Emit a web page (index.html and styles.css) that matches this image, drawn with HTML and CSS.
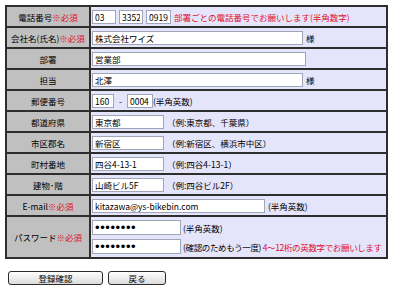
FILE: index.html
```html
<!DOCTYPE html>
<html lang="ja">
<head>
  <meta charset="UTF-8" />
  <title>会員登録</title>
  <link rel="stylesheet" href="styles.css">
</head>
<body>
  <form class="entry-form">
    <table class="entry-table">
      <colgroup>
        <col class="col-label" />
        <col />
      </colgroup>
      <tr>
        <th>電話番号<span class="req">※必須</span></th>
        <td>
          <div class="field">
            <input class="in w-tel1" type="text" value="03" />
            <input class="in w-tel2" type="text" value="3352" />
            <input class="in w-tel3" type="text" value="0919" />
            <span class="req">部署ごとの電話番号でお願いします(半角数字)</span>
          </div>
        </td>
      </tr>
      <tr>
        <th>会社名(氏名)<span class="req">※必須</span></th>
        <td>
          <div class="field">
            <input class="in w-long" type="text" value="株式会社ワイズ" />
            <span>様</span>
          </div>
        </td>
      </tr>
      <tr>
        <th>部署</th>
        <td>
          <div class="field">
            <input class="in w-dept" type="text" value="営業部" />
          </div>
        </td>
      </tr>
      <tr>
        <th>担当</th>
        <td>
          <div class="field">
            <input class="in w-long" type="text" value="北澤" />
            <span>様</span>
          </div>
        </td>
      </tr>
      <tr>
        <th>郵便番号</th>
        <td>
          <div class="field">
            <input class="in w-zip1" type="text" value="160" />
            <span class="dash">-</span>
            <input class="in w-zip2" type="text" value="0004" />
            <span class="tight">(半角英数)</span>
          </div>
        </td>
      </tr>
      <tr>
        <th>都道府県</th>
        <td>
          <div class="field">
            <input class="in w-addr" type="text" value="東京都" />
            <span>（例:東京都、千葉県）</span>
          </div>
        </td>
      </tr>
      <tr>
        <th>市区郡名</th>
        <td>
          <div class="field">
            <input class="in w-addr" type="text" value="新宿区" />
            <span>（例:新宿区、横浜市中区）</span>
          </div>
        </td>
      </tr>
      <tr>
        <th>町村番地</th>
        <td>
          <div class="field">
            <input class="in w-addr" type="text" value="四谷4-13-1" />
            <span>（例:四谷4-13-1）</span>
          </div>
        </td>
      </tr>
      <tr>
        <th>建物･階</th>
        <td>
          <div class="field">
            <input class="in w-addr" type="text" value="山崎ビル5F" />
            <span>（例:四谷ビル2F）</span>
          </div>
        </td>
      </tr>
      <tr>
        <th>E-mail<span class="req">※必須</span></th>
        <td>
          <div class="field">
            <input class="in w-mail" type="text" value="kitazawa@ys-bikebin.com" />
            <span>(半角英数)</span>
          </div>
        </td>
      </tr>
      <tr>
        <th class="tall">パスワード<span class="req">※必須</span></th>
        <td class="tall">
          <div class="field field-pw">
            <input class="in pw w-pass" type="password" value="12345678" />
            <span>(半角英数)</span>
          </div>
          <div class="field field-pw">
            <input class="in pw w-pass" type="password" value="12345678" />
            <span class="condensed">(確認のためもう一度) <span class="req">4〜12桁の英数字でお願いします</span></span>
          </div>
        </td>
      </tr>
    </table>
    <div class="actions">
      <button type="button" class="btn btn-confirm">登録確認</button>
      <button type="button" class="btn btn-back">戻る</button>
    </div>
  </form>
</body>
</html>
```

FILE: styles.css
```css
body {
  margin: 0;
  padding: 0;
  background-color: #ffffff;
  color: #000000;
  font-family: "Noto Sans CJK JP", "Noto Sans", sans-serif;
  font-size: 8.5px;
}
.entry-form {
  padding: 5px 0 0 5px;
}
.entry-table {
  border-collapse: collapse;
  table-layout: fixed;
  width: 383px;
}
.col-label {
  width: 84px;
}
.entry-table th,
.entry-table td {
  border: 2px solid #2e2e2e;
  height: 19px;
  padding: 0;
}
.entry-table th {
  background-color: #c0c0c0;
  font-weight: normal;
  text-align: center;
  white-space: nowrap;
}
.entry-table td {
  background-color: #e4e4fa;
  padding-left: 1px;
  overflow: hidden;
}
.entry-table .tall {
  height: 40px;
}
.req {
  color: #e0102a;
}
.field {
  display: flex;
  align-items: center;
  gap: 3px;
  height: 19px;
  white-space: nowrap;
}
.field-pw {
  gap: 2px;
}
.condensed {
  letter-spacing: -0.35px;
}
.in {
  box-sizing: border-box;
  height: 14px;
  margin: 0;
  padding: 0 2px;
  border: 1px solid #9ea6b8;
  background-color: #ffffff;
  font-family: "Noto Sans CJK JP", "Noto Sans", sans-serif;
  font-size: 8.5px;
  color: #000000;
}
.pw {
  font-family: "Liberation Sans", sans-serif;
  font-size: 13px;
  letter-spacing: 0.6px;
  height: 15px;
}
.w-tel1 { width: 24px; }
.w-tel2 { width: 24px; }
.w-tel3 { width: 25px; }
.w-long { width: 211px; }
.w-dept { width: 214px; }
.w-zip1 { width: 22px; }
.w-zip2 { width: 26px; }
.w-addr { width: 72px; }
.w-mail { width: 173px; }
.w-pass { width: 89px; }
.dash {
  padding: 0 2px;
}
.tight {
  margin-left: -3px;
}
.actions {
  display: flex;
  gap: 5px;
  padding: 12px 0 0 3px;
}
.btn {
  box-sizing: border-box;
  height: 14px;
  padding: 0;
  border: 1px solid #2a2a2a;
  border-radius: 3px;
  background: linear-gradient(#ffffff, #dcdcdc);
  font-family: "Noto Sans CJK JP", "Noto Sans", sans-serif;
  font-size: 8.5px;
  line-height: 12px;
  color: #000000;
}
.btn-confirm { width: 95px; }
.btn-back { width: 58px; }
```
